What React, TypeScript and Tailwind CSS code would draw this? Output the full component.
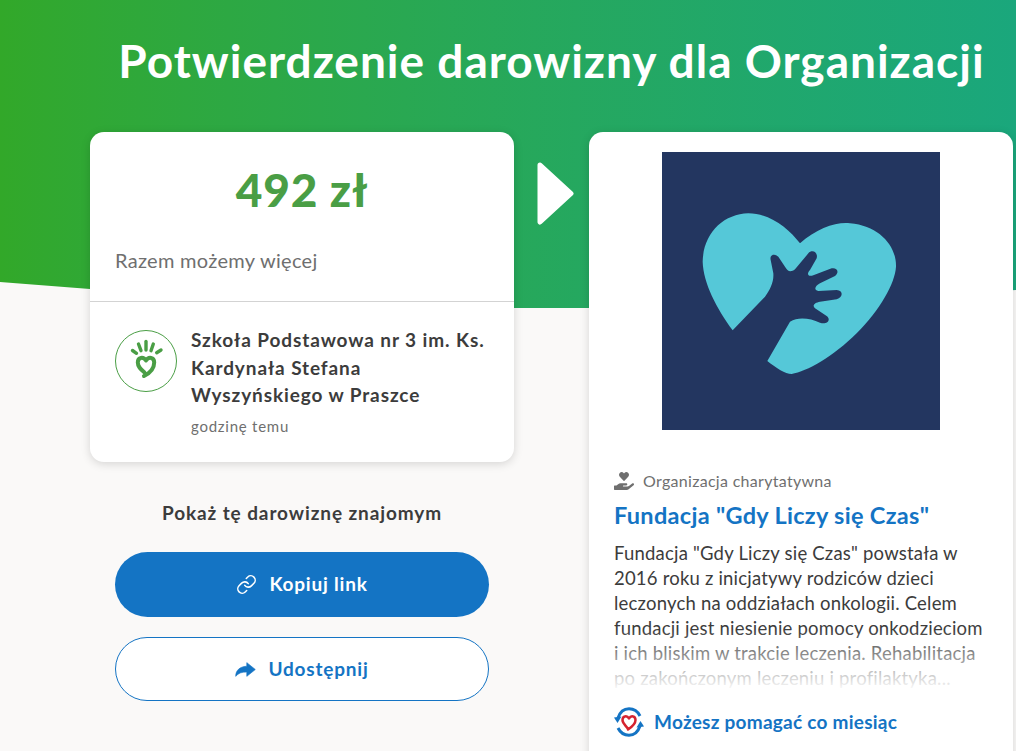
import { Link as LinkIcon } from "lucide-react";
import { FaHandHoldingHeart } from "react-icons/fa";

function OrgLogo() {
  return (
    <svg viewBox="36 36 834 834" className="w-[278px] h-[278px] block">
      <rect x="36" y="36" width="834" height="834" fill="#233660" />
      <path
        fill="#55c8d8"
        d="M450 310C500 265 560 245 600 250C690 258 740 320 738 380C735 430 690 510 620 580C550 650 470 695 425 702C405 702 380 685 352 663L420 545C445 530 480 535 510 548C530 555 545 540 530 528L495 505C485 495 495 488 510 485L560 478C580 470 580 452 560 450L505 453C490 450 495 438 510 430L555 408C570 395 560 382 545 385L490 406C472 412 470 400 480 390L500 355C505 335 485 328 475 340L435 388C420 400 412 392 405 380L385 350C375 340 358 342 362 360L370 400C372 425 360 450 345 470L248 571C200 505 160 430 158 365C160 280 220 222 295 220C360 220 415 265 450 310Z"
      />
    </svg>
  );
}

function DonorLogo() {
  return (
    <svg viewBox="0 0 62 62" className="w-[62px] h-[62px] shrink-0">
      <circle cx="31" cy="31" r="30.5" fill="none" stroke="#4a9e45" strokeWidth="1" />
      <g fill="none" stroke="#4a9e45" strokeLinecap="round">
        <path d="M17.500 20.500L21.500 23.300" strokeWidth="3.4" />
        <path d="M23.500 14L26 20.700" strokeWidth="3.4" />
        <path d="M31 11.500L31 20" strokeWidth="3.4" />
        <path d="M38.300 14L36 20.700" strokeWidth="3.4" />
        <path d="M46 20L41.700 22.700" strokeWidth="3.4" />
        <path
          d="M31 30.500C28.500 26.500 22.800 27 22.800 32.500C22.800 37 26 39.500 29.500 42.500M31 30.500C33.500 26.500 39.200 27 39.200 32.500C39.200 39 34 43.500 29 46"
          strokeWidth="4"
        />
      </g>
    </svg>
  );
}

function ShareIcon() {
  return (
    <svg viewBox="406 366 64 46" className="w-[21px] h-[15px] shrink-0" fill="currentColor">
      <path
        d="M468 389L442 368V379C420 380 408 392 408 410C416 400 428 396 442 397V410Z"
        stroke="currentColor"
        strokeWidth="2"
        strokeLinejoin="round"
      />
    </svg>
  );
}

function MonthlyIcon() {
  return (
    <svg viewBox="0 0 30 30" className="w-[30px] h-[30px] shrink-0">
      <g fill="none" stroke="#1474c4" strokeWidth="3">
        <path d="M4 11C6 5 10.500 1.800 15 1.800C20 1.800 24 5 26 9" />
        <path d="M26 19C24 25 19.500 28.200 15 28.200C10 28.200 6 25 4 21" />
      </g>
      <path d="M0 10.500L7.500 9.500L3.500 16Z" fill="#1474c4" />
      <path d="M30 19.500L22.500 20.500L26.500 14Z" fill="#1474c4" />
      <path
        d="M15 11.500C13 8 8.500 9 8.500 13C8.500 16.500 12 18.500 14 22M15 11.500C17 8 21.500 9 21.500 13C21.500 17 17 20.500 14 22.500"
        fill="none"
        stroke="#d5232f"
        strokeWidth="2.500"
        strokeLinecap="round"
      />
    </svg>
  );
}

export default function App() {
  return (
    <div className="relative h-[751px] overflow-hidden bg-[#faf9f8] font-['Lato',sans-serif] text-[#3c3c3c]">
      {/* green header shape */}
      <div className="absolute inset-x-0 top-0 h-[340px] bg-gradient-to-r from-[#32a829] to-[#1aa77c] [clip-path:polygon(0_282px,90px_289px,300px_303px,514px_308px,589px_308px,800px_302px,100%_290px,100%_0,0_0)]" />

      <div className="relative w-[923px] ml-[90px]">
        <h1 className="h-[132px] pt-[31px] text-center text-[46px] leading-[60px] font-bold tracking-[1px] text-white">
          Potwierdzenie darowizny dla Organizacji
        </h1>

        <div className="flex items-start">
          {/* donation column */}
          <div className="w-[424px] shrink-0">
            <div className="bg-white rounded-[14px] shadow-[0_2px_10px_rgba(0,0,0,0.15)] h-[330px]">
              <div className="h-[170px] border-b border-[#d3d3d3] px-[25px]">
                <p className="pt-[28px] text-center text-[46px] leading-[60px] font-black tracking-[0.8px] text-[#4a9e45]">
                  492 zł
                </p>
                <p className="mt-[26px] text-[20px] leading-[28px] tracking-[0.3px] text-[#6f6f6f]">
                  Razem możemy więcej
                </p>
              </div>
              <div className="flex gap-[14px] px-[25px] pt-[24px]">
                <div className="pt-[4px]">
                  <DonorLogo />
                </div>
                <div>
                  <p className="text-[19px] leading-[27.500px] font-bold tracking-[0.9px] text-[#3c3c3c]">
                    Szkoła Podstawowa nr 3 im. Ks. Kardynała Stefana Wyszyńskiego w Praszce
                  </p>
                  <p className="mt-[7px] text-[15px] leading-[20px] tracking-[0.75px] text-[#6f6f6f]">godzinę temu</p>
                </div>
              </div>
            </div>

            <div className="px-[25px]">
              <p className="mt-[38px] text-center text-[19px] leading-[25px] font-bold tracking-[0.9px] text-[#3c3c3c]">
                Pokaż tę darowiznę znajomym
              </p>
              <button className="mt-[27px] flex h-[65px] w-full items-center justify-center gap-[12px] rounded-full bg-[#1474c4] text-[19px] font-bold tracking-[0.8px] text-white">
                <LinkIcon size={21} strokeWidth={1.75} />
                Kopiuj link
              </button>
              <button className="mt-[20px] flex h-[64px] w-full items-center justify-center gap-[12px] rounded-full border border-[#1474c4] bg-white text-[19px] font-bold tracking-[0.8px] text-[#1474c4]">
                <ShareIcon />
                Udostępnij
              </button>
            </div>
          </div>

          {/* arrow */}
          <div className="flex w-[75px] shrink-0 justify-center pl-[7px] pt-[30px]">
            <svg viewBox="0 0 37 63" className="w-[37px] h-[63px]">
              <path
                d="M3 3L34 31.500L3 60Z"
                fill="#fff"
                stroke="#fff"
                strokeWidth="5"
                strokeLinejoin="round"
              />
            </svg>
          </div>

          {/* organisation card */}
          <div className="w-[424px] h-[640px] shrink-0 rounded-[14px] bg-white shadow-[0_2px_10px_rgba(0,0,0,0.15)] px-[25px] pt-[20px]">
            <div className="flex justify-center">
              <OrgLogo />
            </div>
            <div className="mt-[40px] flex items-center gap-[9px] text-[16px] leading-[22px] tracking-[0.3px] text-[#6f6f6f]">
              <FaHandHoldingHeart size={20} />
              Organizacja charytatywna
            </div>
            <h2 className="mt-[7px] text-[23.500px] leading-[32px] font-bold tracking-[0.3px] text-[#1474c4]">
              Fundacja "Gdy Liczy się Czas"
            </h2>
            <div className="relative mt-[10px] h-[150px] overflow-hidden">
              <p className="text-[18.500px] leading-[25px] tracking-[0.2px] text-[#3c3c3c]">
                Fundacja "Gdy Liczy się Czas" powstała w 2016 roku z inicjatywy rodziców dzieci leczonych na oddziałach
                onkologii. Celem fundacji jest niesienie pomocy onkodzieciom i ich bliskim w trakcie leczenia.
                Rehabilitacja po zakończonym leczeniu i profilaktyka...
              </p>
              <div className="absolute inset-x-0 bottom-0 h-[62px] bg-gradient-to-b from-white/0 to-white" />
            </div>
            <div className="mt-[16px] flex items-center gap-[10px] text-[19px] font-bold tracking-[0.25px] text-[#1474c4]">
              <MonthlyIcon />
              Możesz pomagać co miesiąc
            </div>
          </div>
        </div>
      </div>
    </div>
  );
}
